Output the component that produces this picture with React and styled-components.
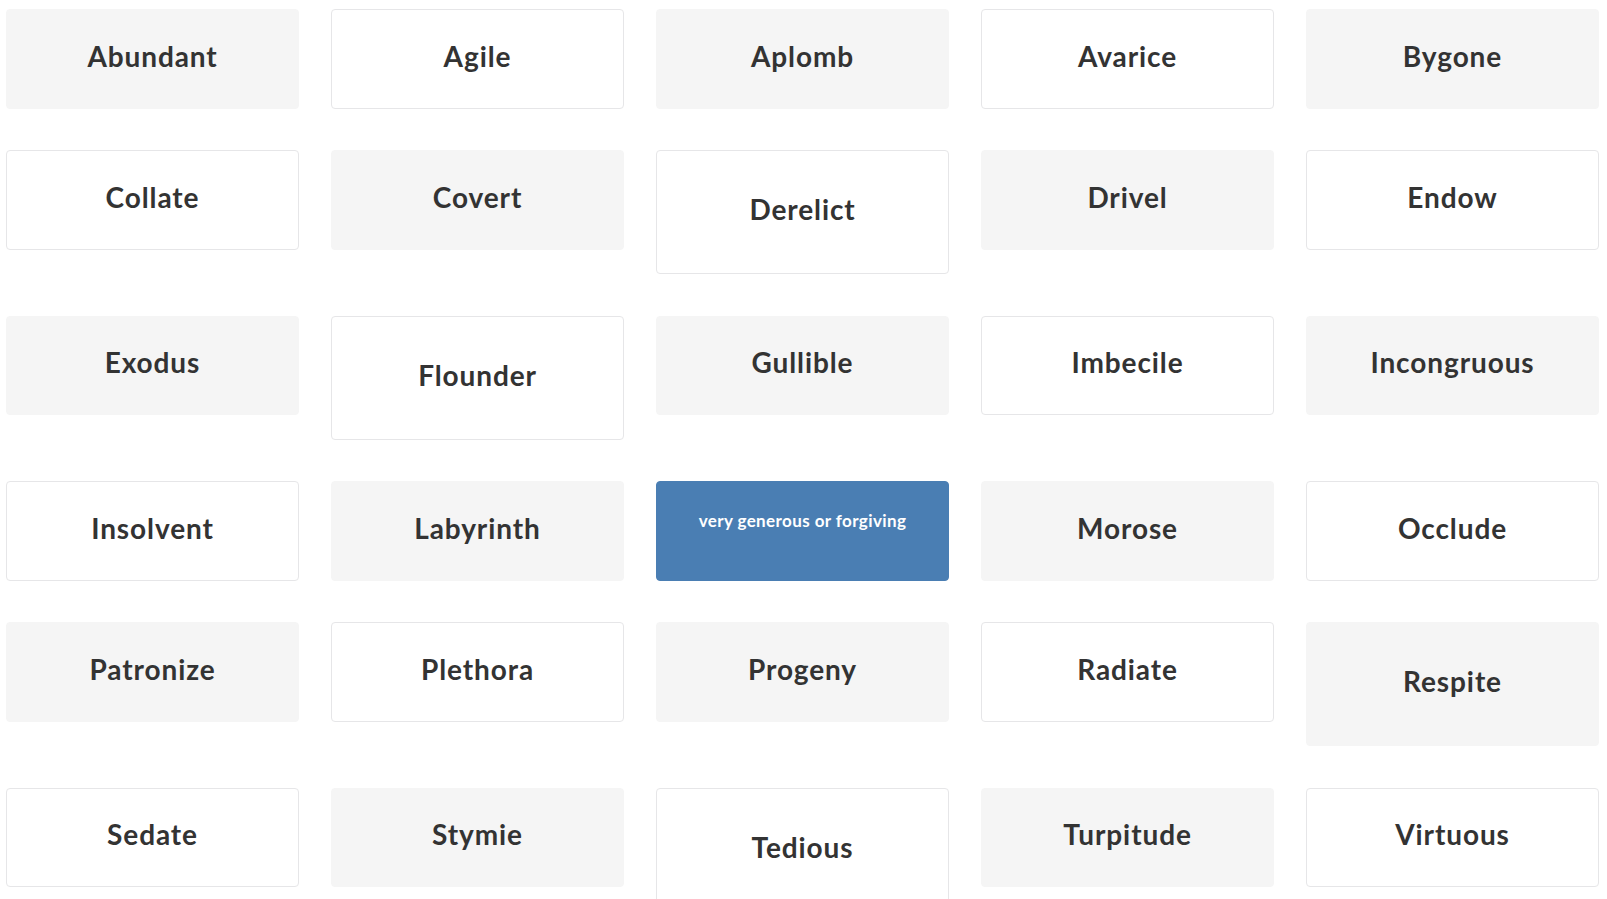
import React from "react";
import styled, { createGlobalStyle } from "styled-components";

const Global = createGlobalStyle`
  html, body { margin: 0; padding: 0; background: #ffffff; }
  body { font-family: "Lato", "Open Sans", sans-serif; color: #333333; }
`;

const Grid = styled.div`
  display: grid;
  grid-template-columns: repeat(5, 1fr);
  column-gap: 32px;
  row-gap: 41.5px;
  align-items: start;
  padding: 9px 8px 0 6px;
`;

const Card = styled.div`
  box-sizing: border-box;
  height: ${(p) => (p.$tall ? 124 : 99.5)}px;
  border-radius: 4px;
  display: flex;
  align-items: center;
  justify-content: center;
  background: ${(p) => (p.$active ? "#4a7eb3" : p.$shade ? "#f5f5f5" : "#ffffff")};
  border: 1px solid ${(p) => (p.$active ? "#4a7eb3" : p.$shade ? "#f5f5f5" : "#e6e6e8")};
  cursor: pointer;
`;

const Word = styled.span`
  font-size: 28px;
  line-height: 1.2;
  font-weight: 700;
  color: #333333;
  letter-spacing: 0.9px;
  margin-bottom: 4px;
`;

const Definition = styled.span`
  font-size: 17px;
  font-weight: 700;
  color: #ffffff;
  letter-spacing: 0.4px;
  margin-bottom: 20px;
`;

const words = [
  "Abundant", "Agile", "Aplomb", "Avarice", "Bygone",
  "Collate", "Covert", "Derelict", "Drivel", "Endow",
  "Exodus", "Flounder", "Gullible", "Imbecile", "Incongruous",
  "Insolvent", "Labyrinth", "Magnanimous", "Morose", "Occlude",
  "Patronize", "Plethora", "Progeny", "Radiate", "Respite",
  "Sedate", "Stymie", "Tedious", "Turpitude", "Virtuous",
];

const tall = new Set(["Derelict", "Flounder", "Respite", "Tedious"]);
const active = { Magnanimous: "very generous or forgiving" };

export default function App() {
  return (
    <>
      <Global />
      <Grid>
        {words.map((w, i) => (
          <Card key={w} $shade={i % 2 === 0} $tall={tall.has(w)} $active={!!active[w]}>
            {active[w] ? <Definition>{active[w]}</Definition> : <Word>{w}</Word>}
          </Card>
        ))}
      </Grid>
    </>
  );
}
